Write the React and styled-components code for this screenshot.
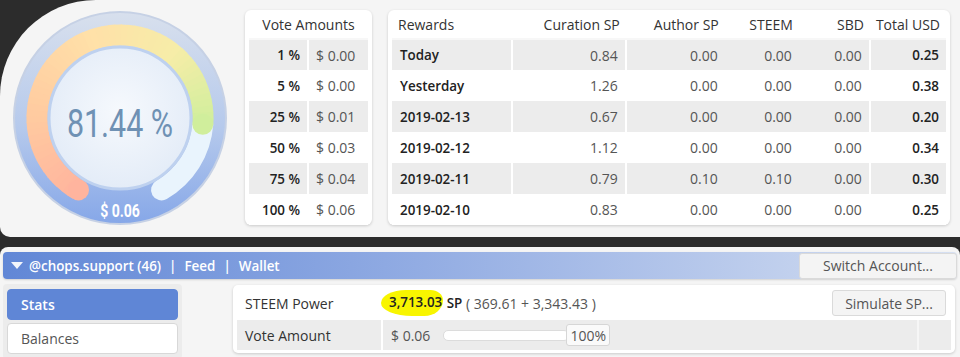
import styled, { createGlobalStyle } from "styled-components";

const GlobalStyle = createGlobalStyle`
  body {
    margin: 0;
    background: #2c2c2c;
    font-family: "Open Sans", "Liberation Sans", sans-serif;
    font-size: 14px;
    color: #333;
  }
`;

const voteAmounts = [
  ["1 %", "$ 0.00"],
  ["5 %", "$ 0.00"],
  ["25 %", "$ 0.01"],
  ["50 %", "$ 0.03"],
  ["75 %", "$ 0.04"],
  ["100 %", "$ 0.06"],
];

const rewards = [
  ["Today", "0.84", "0.00", "0.00", "0.00", "0.25"],
  ["Yesterday", "1.26", "0.00", "0.00", "0.00", "0.38"],
  ["2019-02-13", "0.67", "0.00", "0.00", "0.00", "0.20"],
  ["2019-02-12", "1.12", "0.00", "0.00", "0.00", "0.34"],
  ["2019-02-11", "0.79", "0.10", "0.10", "0.00", "0.30"],
  ["2019-02-10", "0.83", "0.00", "0.00", "0.00", "0.25"],
];

const CX = 120;
const CY = 118;

function polar(r, deg) {
  const a = (deg * Math.PI) / 180;
  return [CX + r * Math.sin(a), CY - r * Math.cos(a)];
}

function arcPath(r, a0, a1) {
  const [x0, y0] = polar(r, a0);
  const [x1, y1] = polar(r, a1);
  const large = a1 - a0 > 180 ? 1 : 0;
  return `M ${x0} ${y0} A ${r} ${r} 0 ${large} 1 ${x1} ${y1}`;
}

// pastel colours along the gauge arc, by angle from 12 o'clock
const stops = [
  [-150, [255, 180, 158]],
  [-90, [255, 202, 160]],
  [-20, [255, 224, 168]],
  [40, [246, 237, 168]],
  [94, [208, 238, 156]],
];

function colorAt(deg) {
  for (let i = 0; i < stops.length - 1; i++) {
    const [a, c] = stops[i];
    const [b, d] = stops[i + 1];
    if (deg >= a && deg <= b) {
      const t = (deg - a) / (b - a);
      const mix = c.map((v, k) => Math.round(v + (d[k] - v) * t));
      return `rgb(${mix.join(",")})`;
    }
  }
  return "rgb(208,238,156)";
}

function Gauge({ percent, value }) {
  const start = -150;
  const sweep = 300;
  const end = start + (sweep * percent) / 100;
  const R = 83;
  const W = 21;
  const n = 60;
  const segs = [];
  for (let i = 0; i < n; i++) {
    const a0 = start + ((end - start) * i) / n;
    const a1 = start + ((end - start) * (i + 1)) / n + 0.6;
    segs.push(
      <path
        key={i}
        d={arcPath(R, a0, Math.min(a1, end))}
        stroke={colorAt((a0 + a1) / 2)}
        strokeWidth={W}
        fill="none"
      />
    );
  }
  const [sx, sy] = polar(R, start);
  const [ex, ey] = polar(R, end);
  return (
    <GaugeBox>
      <svg width="240" height="237" viewBox="0 0 240 237">
        <defs>
          <linearGradient id="rim" x1="0" y1="0" x2="0" y2="1">
            <stop offset="0" stopColor="#d8e0ed" />
            <stop offset="0.55" stopColor="#b5c9ec" />
            <stop offset="1" stopColor="#86a7e8" />
          </linearGradient>
          <radialGradient id="face" cx="0.5" cy="0.45" r="0.6">
            <stop offset="0" stopColor="#f6f9fd" />
            <stop offset="1" stopColor="#e2ebf7" />
          </radialGradient>
        </defs>
        <circle cx={CX} cy={CY} r="106" fill="url(#rim)" stroke="#c6d1e5" strokeWidth="2" />
        <path
          d={arcPath(R, end, 150)}
          stroke="#e9f4fd"
          strokeWidth={W}
          strokeLinecap="round"
          fill="none"
        />
        {segs}
        <circle cx={sx} cy={sy} r={W / 2} fill={colorAt(start)} />
        <circle cx={ex} cy={ey} r={W / 2} fill={colorAt(end - 0.1)} />
        <circle cx={CX} cy={CY} r="71" fill="url(#face)" stroke="#bed1ef" strokeWidth="3" />
        <text
          transform={`translate(${CX} 137) scale(0.8 1)`}
          textAnchor="middle"
          fontFamily="Roboto, 'Liberation Sans', sans-serif"
          fontSize="38"
          fill="#6f91b4"
        >
          {percent.toFixed(2)} %
        </text>
        <text
          transform={`translate(${CX} 217) scale(0.78 1)`}
          textAnchor="middle"
          fontFamily="Roboto, 'Liberation Sans', sans-serif"
          fontWeight="700"
          fontSize="18"
          fill="#ffffff"
        >
          {value}
        </text>
      </svg>
    </GaugeBox>
  );
}

export default function App() {
  return (
    <>
      <GlobalStyle />
      <Page>
        <TopPanel>
          <Gauge percent={81.44} value="$ 0.06" />
          <VoteCard>
            <Table>
              <thead>
                <tr>
                  <HeadCell colSpan={2} $align="center">
                    Vote Amounts
                  </HeadCell>
                </tr>
              </thead>
              <tbody>
                {voteAmounts.map(([pct, usd], i) => (
                  <Row key={pct} $striped={i % 2 === 0}>
                    <Cell $align="right" $bold $w="59px">
                      {pct}
                    </Cell>
                    <Cell $divider $pad="0 0 0 7px">
                      {usd}
                    </Cell>
                  </Row>
                ))}
              </tbody>
            </Table>
          </VoteCard>
          <RewardsCard>
            <Table>
              <thead>
                <tr>
                  <HeadCell $w="121px">Rewards</HeadCell>
                  <HeadCell $align="right" $w="110px">Curation SP</HeadCell>
                  <HeadCell $align="right" $w="94px">Author SP</HeadCell>
                  <HeadCell $align="right" $w="68px">STEEM</HeadCell>
                  <HeadCell $align="right" $w="68px">SBD</HeadCell>
                  <HeadCell $align="right">Total USD</HeadCell>
                </tr>
              </thead>
              <tbody>
                {rewards.map((r, i) => (
                  <Row key={r[0]} $striped={i % 2 === 0}>
                    <Cell $bold $pad="0 0 0 8px">
                      {r[0]}
                    </Cell>
                    <Cell $align="right" $divider>{r[1]}</Cell>
                    <Cell $align="right" $divider>{r[2]}</Cell>
                    <Cell $align="right">{r[3]}</Cell>
                    <Cell $align="right">{r[4]}</Cell>
                    <Cell $align="right" $bold $divider>
                      {r[5]}
                    </Cell>
                  </Row>
                ))}
              </tbody>
            </Table>
          </RewardsCard>
        </TopPanel>

        <BottomPanel>
          <HeaderBar>
            <Crumbs>
              <Caret />
              <span>@chops.support (46)</span>
              <Sep>|</Sep>
              <span>Feed</span>
              <Sep>|</Sep>
              <span>Wallet</span>
            </Crumbs>
            <Button $w="158px">Switch Account...</Button>
          </HeaderBar>
          <Body>
            <Sidebar>
              <NavItem $active>Stats</NavItem>
              <NavItem>Balances</NavItem>
            </Sidebar>
            <StatsCard>
              <StatRow>
                <StatLabel>STEEM Power</StatLabel>
                <StatValue>
                  <Highlight>3,713.03</Highlight>
                  <Strong>&nbsp;SP</Strong>
                  <Muted>&nbsp;( 369.61 + 3,343.43 )</Muted>
                  <Button $w="114px" $push>
                    Simulate SP...
                  </Button>
                </StatValue>
              </StatRow>
              <StatRow $striped>
                <StatLabel>Vote Amount</StatLabel>
                <StatValue $divider>
                  <Muted>$ 0.06</Muted>
                  <Track />
                  <PctBox>100%</PctBox>
                </StatValue>
                <EndCell />
              </StatRow>
            </StatsCard>
          </Body>
        </BottomPanel>
      </Page>
    </>
  );
}

const Page = styled.div`
  display: flex;
  flex-direction: column;
  width: 960px;
  height: 357px;
  overflow: hidden;
`;

const TopPanel = styled.div`
  display: flex;
  align-items: flex-start;
  height: 237px;
  flex-shrink: 0;
  background: #f5f5f5;
  border-radius: 96px 0 0 10px;
`;

const GaugeBox = styled.div`
  width: 240px;
  height: 237px;
  flex-shrink: 0;
  svg {
    display: block;
  }
`;

const Card = styled.div`
  background: #fff;
  border-radius: 6px;
  box-shadow: 0 1px 3px rgba(0, 0, 0, 0.18);
  margin-top: 10px;
  height: 215px;
  box-sizing: border-box;
  padding: 0 4px;
`;

const VoteCard = styled(Card)`
  width: 127px;
  margin-left: 5px;
`;

const RewardsCard = styled(Card)`
  width: 562px;
  margin-left: 16px;
`;

const Table = styled.table`
  width: 100%;
  border-collapse: collapse;
  font-size: 14px;
`;

const HeadCell = styled.th`
  font-weight: 400;
  color: #333;
  height: 28px;
  padding: 0 6px;
  text-align: ${(p) => p.$align || "left"};
  width: ${(p) => p.$w || "auto"};
  border-bottom: 2px solid #f7f7f7;
  white-space: nowrap;
`;

const Row = styled.tr`
  background: ${(p) => (p.$striped ? "#ececec" : "#fff")};
`;

const Cell = styled.td`
  height: 31px;
  padding: ${(p) => p.$pad || "0 7px"};
  text-align: ${(p) => p.$align || "left"};
  font-weight: ${(p) => (p.$bold ? 600 : 400)};
  font-size: ${(p) => (p.$bold ? "13.4px" : "14px")};
  color: ${(p) => (p.$bold ? "#222" : "#555")};
  width: ${(p) => p.$w || "auto"};
  border-left: ${(p) => (p.$divider ? "2px solid #fff" : "none")};
  white-space: nowrap;
  box-sizing: border-box;
`;

const BottomPanel = styled.div`
  flex: 1;
  margin-top: 10px;
  background: #f5f5f5;
  border-radius: 8px 8px 0 0;
  padding: 5px 3px 0;
  display: flex;
  flex-direction: column;
`;

const HeaderBar = styled.div`
  height: 27px;
  display: flex;
  align-items: center;
  justify-content: space-between;
  border-radius: 4px;
  background: linear-gradient(to right, #6187d6 0%, #8ea9e2 40%, #d6e0f2 100%);
  box-shadow: 0 1px 2px rgba(0, 0, 0, 0.15);
  padding-left: 8px;
`;

const Crumbs = styled.div`
  display: flex;
  align-items: center;
  color: #fff;
  font-weight: 600;
  font-size: 13.4px;
`;

const Caret = styled.span`
  width: 0;
  height: 0;
  border-left: 6px solid transparent;
  border-right: 6px solid transparent;
  border-top: 7px solid #f2f5fb;
  margin-right: 6px;
`;

const Sep = styled.span`
  margin: 0 8px;
`;

const Button = styled.div`
  width: ${(p) => p.$w};
  height: 26px;
  box-sizing: border-box;
  display: flex;
  align-items: center;
  justify-content: center;
  background: #f4f4f4;
  border: 1px solid #dadada;
  border-radius: 3px;
  color: #555;
  font-size: 14px;
  margin-left: ${(p) => (p.$push ? "auto" : "0")};
  flex-shrink: 0;
`;

const Body = styled.div`
  display: flex;
  align-items: flex-start;
  margin-top: 5px;
`;

const Sidebar = styled.div`
  width: 179px;
  box-sizing: border-box;
  display: flex;
  flex-direction: column;
  gap: 3px;
  padding: 5px 4px;
  background: #ececec;
  border-radius: 4px;
`;

const NavItem = styled.div`
  height: 31px;
  box-sizing: border-box;
  display: flex;
  align-items: center;
  padding-left: 13px;
  border-radius: 4px;
  background: ${(p) => (p.$active ? "#5f86d6" : "#fff")};
  border: 1px solid ${(p) => (p.$active ? "#5f86d6" : "#d8d8d8")};
  color: ${(p) => (p.$active ? "#fff" : "#555")};
  font-weight: ${(p) => (p.$active ? 600 : 400)};
`;

const StatsCard = styled.div`
  margin-left: 51px;
  margin-top: 1px;
  width: 722px;
  box-sizing: border-box;
  background: #fff;
  border-radius: 5px;
  box-shadow: 0 1px 3px rgba(0, 0, 0, 0.18);
  padding: 3px 4px;
  display: flex;
  flex-direction: column;
  gap: 2px;
`;

const StatRow = styled.div`
  display: flex;
  align-items: center;
  height: 30px;
  background: ${(p) => (p.$striped ? "#ececec" : "#fff")};
`;

const StatLabel = styled.div`
  width: 144px;
  padding-left: 8px;
  box-sizing: border-box;
  color: #333;
  flex-shrink: 0;
`;

const StatValue = styled.div`
  flex: 1;
  align-self: stretch;
  display: flex;
  align-items: center;
  padding: 0 5px 0 8px;
  border-left: ${(p) => (p.$divider ? "2px solid #fff" : "none")};
`;

const EndCell = styled.div`
  width: 32px;
  align-self: stretch;
  border-left: 2px solid #f6f6f6;
`;

const Highlight = styled.span`
  font-weight: 600;
  font-size: 13.4px;
  color: #222;
  background: #f8f500;
  padding: 3px 1px 5px 8px;
  margin-left: -8px;
  border-radius: 40% 20% 30% 50% / 50% 40% 60% 50%;
`;

const Strong = styled.span`
  font-weight: 600;
  font-size: 13.4px;
  color: #222;
`;

const Muted = styled.span`
  color: #555;
  white-space: pre;
`;

const Track = styled.div`
  width: 124px;
  height: 9px;
  margin-left: 13px;
  background: #fff;
  border: 1px solid #dcdcdc;
  border-radius: 5px;
`;

const PctBox = styled.div`
  height: 22px;
  width: 44px;
  box-sizing: border-box;
  margin-left: -3px;
  display: flex;
  align-items: center;
  justify-content: center;
  background: #fafafa;
  border: 1px solid #d6d6d6;
  border-radius: 3px;
  color: #555;
`;
